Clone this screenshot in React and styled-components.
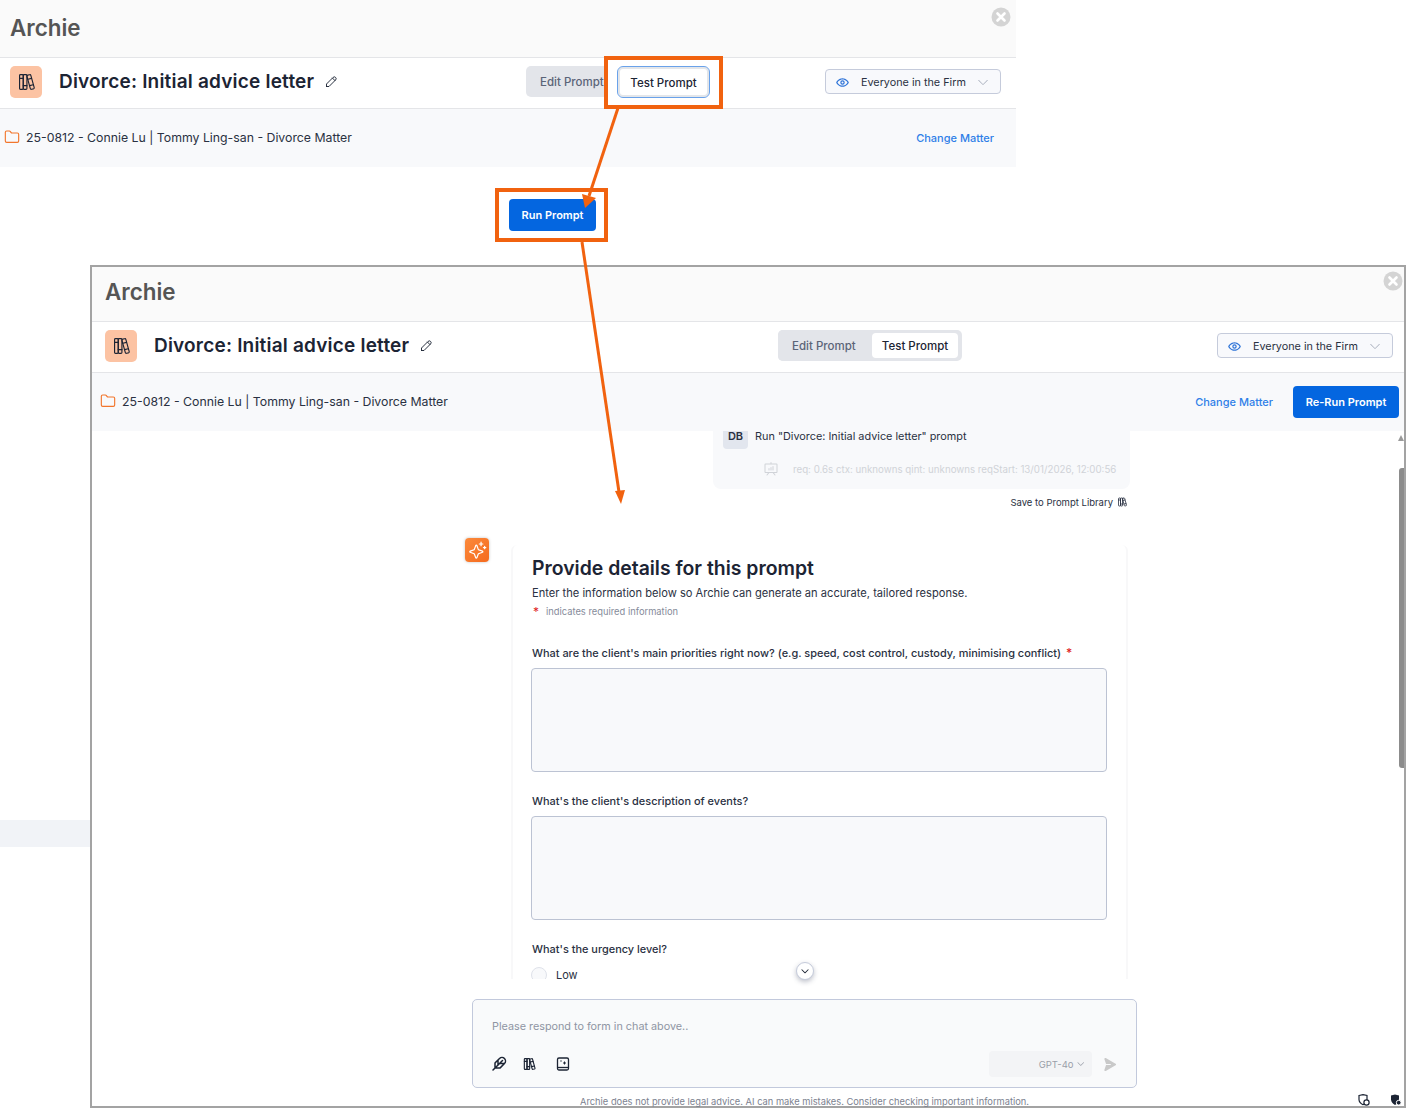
import React from "react";
import styled, { createGlobalStyle } from "styled-components";
import {
  PiEyeBold,
  PiCaretDownLight,
  PiCaretDown,
  PiCaretDownBold,
  PiSparkle,
  PiPresentationChart,
  PiFeatherBold,
  PiPaperPlaneRightFill,
} from "react-icons/pi";
import { TbBooks, TbPencil } from "react-icons/tb";
import { LuFolder } from "react-icons/lu";

const GlobalStyle = createGlobalStyle`
  html, body {
    margin: 0;
    padding: 0;
    background: #fff;
    font-family: Inter, "Noto Sans", sans-serif;
    color: #1c2434;
  }
  * { box-sizing: border-box; }
`;

const ORANGE = "#f1620f";

const Canvas = styled.div`
  position: relative;
  width: 1407px;
  height: 1109px;
  overflow: hidden;
`;

const Piece = styled.div`
  position: absolute;
  left: ${(p) => p.$x}px;
  top: ${(p) => p.$y}px;
  width: ${(p) => p.$w}px;
  height: ${(p) => p.$h}px;
`;

const SideStrip = styled(Piece)`
  background: #f1f3f7;
`;

const Framed = styled(Piece)`
  border: 2px solid #a3a3a3;
  background: #fff;
  display: flex;
  flex-direction: column;
`;

const Highlight = styled(Piece)`
  border: 4px solid ${ORANGE};
  z-index: 3;
`;

const Arrows = styled.svg`
  position: absolute;
  inset: 0;
  z-index: 4;
  pointer-events: none;
`;

const Header = styled.div`
  height: ${(p) => p.$height}px;
  flex: none;
  box-sizing: content-box;
  background: #fafafa;
  border-bottom: 1px solid #e4e5e8;
  display: flex;
  justify-content: space-between;
  align-items: center;
  padding: 0 ${(p) => p.$closeRight}px 0 ${(p) => p.$pad}px;
`;

const AppName = styled.div`
  font-size: 22.4px;
  font-weight: 600;
  color: #555;
  margin-bottom: ${(p) => p.$lift}px;
`;

const CloseButton = styled.svg`
  align-self: flex-start;
  margin-top: ${(p) => p.$top}px;
`;

const TitleRow = styled.div`
  height: 51px;
  flex: none;
  background: #fff;
  border-bottom: 1px solid #e4e5e8;
  display: grid;
  grid-template-columns: ${(p) => p.$left}px auto 1fr;
  align-items: center;
  padding: 0 ${(p) => p.$right}px 3px ${(p) => p.$pad}px;
`;

const TitleGroup = styled.div`
  display: flex;
  align-items: center;
`;

const IconTile = styled.div`
  width: 32px;
  height: 32px;
  border-radius: 5px;
  background: #fcc3a3;
  color: #1c2434;
  display: flex;
  align-items: center;
  justify-content: center;
  font-size: 22px;
  margin-right: 17px;
`;

const PromptTitle = styled.div`
  font-size: 19px;
  letter-spacing: 0.2px;
  font-weight: 600;
  color: #1c2434;
  margin-right: 10px;
`;

const EditIcon = styled.span`
  display: flex;
  font-size: 15px;
  color: #1c2434;
`;

const Toggle = styled.div`
  display: flex;
  align-items: center;
  border-radius: 5px;
  height: 31px;
  width: 184px;
  background: ${(p) => (p.$focused ? "transparent" : "#e3e5ea")};
  padding: ${(p) => (p.$focused ? "0" : "0 4px 0 0")};
`;

const EditTab = styled.div`
  font-size: 11.5px;
  font-weight: 500;
  color: #5b6478;
  white-space: nowrap;
  height: 31px;
  line-height: 33px;
  padding-left: 14px;
  flex: none;
  width: ${(p) => (p.$focused ? 78 : 94)}px;
  overflow: hidden;
  background: #e3e5ea;
  border-radius: 5px 0 0 5px;
`;

const TestTab = styled.div`
  font-size: 11.5px;
  font-weight: 500;
  color: #1c2434;
  background: #fff;
  border-radius: ${(p) => (p.$focused ? 6 : 4)}px;
  text-align: center;
  white-space: nowrap;
  flex: none;
  height: ${(p) => (p.$focused ? 32 : 25)}px;
  line-height: ${(p) => (p.$focused ? 32 : 27)}px;
  width: ${(p) => (p.$focused ? 93 : 86)}px;
  margin-left: ${(p) => (p.$focused ? 13 : 0)}px;
  border: ${(p) => (p.$focused ? "1px solid #6aa2ea" : "none")};
  box-shadow: ${(p) => (p.$focused ? "inset 0 0 0 2px #e3e6ea" : "none")};
`;

const AudienceSelect = styled.div`
  justify-self: end;
  width: 176px;
  height: 25px;
  padding: 1px 10px 0;
  border: 1px solid #c5cbdb;
  border-radius: 4px;
  background: #f8f9fc;
  display: flex;
  align-items: center;
  font-size: 10.8px;
  color: #2a3142;
`;

const EyeIcon = styled.span`
  display: flex;
  font-size: 13px;
  color: #2f74d8;
  margin-right: 12px;
`;

const Caret = styled.span`
  display: flex;
  margin-left: auto;
  font-size: 14px;
  color: #9aa2b1;
`;

const MatterRow = styled.div`
  position: relative;
  z-index: 1;
  height: 58px;
  flex: none;
  background: #f8f9fb;
  display: flex;
  align-items: center;
  padding: 0 ${(p) => p.$right}px 2px ${(p) => p.$pad}px;
  font-size: 12.3px;
  color: #2a3142;
`;

const FolderIcon = styled.span`
  display: flex;
  font-size: 16px;
  color: #f2762c;
  margin-right: 6px;
`;

const ChangeMatter = styled.div`
  margin: 2px 0 0 auto;
  font-size: 11px;
  font-weight: 500;
  color: #2f7fe8;
`;

const PrimaryButton = styled.div`
  background: #0466e0;
  color: #fff;
  font-size: 11px;
  font-weight: 600;
  border-radius: 4px;
  display: flex;
  align-items: center;
  justify-content: center;
  white-space: nowrap;
`;

const RunButton = styled(PrimaryButton)`
  width: 100%;
  height: 100%;
`;

const RerunButton = styled(PrimaryButton)`
  width: 106px;
  height: 32px;
  margin: 2px 0 0 20px;
`;

/* runs 2px under the matter row and 4px under the fade, so no line of text sits on the clip edge */
const ChatViewport = styled.div`
  height: 554px;
  flex: none;
  margin-top: -2px;
  padding: 2px 0 0 373px;
  overflow: hidden;
  position: relative;
`;

const ChatColumn = styled.div`
  width: 665px;
`;

const UserBubble = styled.div`
  width: 417px;
  margin-left: 248px;
  height: 58px;
  background: #f8f9fb;
  border-radius: 0 0 8px 8px;
  padding: 0 10px;
`;

const UserLine = styled.div`
  display: flex;
  align-items: flex-start;
  font-size: 10.86px;
  color: #2a3142;
`;

const UserAvatar = styled.div`
  width: 25px;
  height: 18px;
  background: #e2e6ee;
  border-radius: 0 0 4px 4px;
  font-size: 11px;
  font-weight: 600;
  line-height: 11px;
  text-align: center;
  margin-right: 7px;
`;

const UserText = styled.div`
  line-height: 10px;
`;

const MetaLine = styled.div`
  display: flex;
  align-items: center;
  height: 16px;
  margin: 12px 0 0 40px;
  font-size: 9.73px;
  color: #d0d3d8;
  white-space: nowrap;
`;

const MetaIcon = styled.span`
  display: flex;
  font-size: 16px;
  margin-right: 14px;
`;

const SaveRow = styled.div`
  display: flex;
  justify-content: flex-end;
  align-items: center;
  height: 14px;
  margin: 6px 2px 0 0;
  font-size: 9.5px;
  color: #2a3142;
  gap: 3px;
`;

const SaveIcon = styled.span`
  display: flex;
  font-size: 12px;
`;

const ResponseRow = styled.div`
  display: flex;
  align-items: flex-start;
  margin-top: 29px;
`;

const BotAvatar = styled.div`
  width: 24px;
  height: 24px;
  flex: none;
  border-radius: 4px;
  background: linear-gradient(135deg, #fb8a3c, #f56a1d);
  box-shadow: 0 0 3px rgba(0, 0, 0, 0.25);
  color: #fff;
  display: flex;
  align-items: center;
  justify-content: center;
  font-size: 19px;
`;

const FormCard = styled.div`
  margin: 7px 0 0 22px;
  width: 617px;
  padding: 11px 19px 0;
  border-left: 2px solid #f8f8f9;
  border-right: 2px solid #f8f8f9;
  border-radius: 6px 6px 0 0;
`;

const FormTitle = styled.div`
  font-size: 19.4px;
  font-weight: 600;
  line-height: 24px;
  color: #1c2434;
`;

const FormIntro = styled.div`
  font-size: 11.13px;
  line-height: 14px;
  margin-top: 6px;
  color: #2a3142;
`;

const RequiredNote = styled.div`
  display: flex;
  align-items: center;
  font-size: 9.35px;
  line-height: 12px;
  margin-top: 6px;
  color: #858b9a;
`;

const Star = styled.span`
  color: #e02424;
  margin: ${(p) => (p.$inline ? "0 0 0 5px" : "0 7px 0 1px")};
  font-size: 12px;
`;

const FieldLabel = styled.div`
  font-size: 10.95px;
  font-weight: 500;
  line-height: 14px;
  margin-top: ${(p) => p.$top}px;
  color: #2a3142;
  white-space: nowrap;
`;

const AnswerBox = styled.div`
  height: 104px;
  margin: 8px 0 0 -1px;
  border: 1px solid #bcc3d3;
  border-radius: 4px;
  background: #f8f9fb;
`;

const RadioRow = styled.div`
  display: flex;
  align-items: center;
  margin-top: 11px;
  font-size: 11px;
  line-height: 14px;
  color: #2a3142;
`;

const RadioDot = styled.span`
  width: 16px;
  height: 16px;
  margin-left: -1px;
  border-radius: 50%;
  border: 1px solid #dfe2ea;
  background: #f8f9fb;
  margin-right: 9px;
`;

const BottomFade = styled.div`
  position: absolute;
  left: 0;
  right: 0;
  bottom: 0;
  height: 4px;
  background: #fff;
`;

const ScrollDown = styled.div`
  position: absolute;
  left: 704px;
  top: 695px;
  width: 18px;
  height: 18px;
  border-radius: 50%;
  background: #fff;
  border: 1px solid #c5cbdb;
  box-shadow: 0 2px 5px rgba(40, 50, 80, 0.3);
  color: #1c2434;
  display: flex;
  align-items: center;
  justify-content: center;
  font-size: 10px;
`;

const Composer = styled.div`
  width: 665px;
  height: 89px;
  flex: none;
  margin: 16px 0 0 380px;
  border: 1px solid #c2c9dc;
  border-radius: 5px;
  background: #f9fafb;
  padding: 0 19px;
  display: flex;
  flex-direction: column;
`;

const Placeholder = styled.div`
  font-size: 10.8px;
  color: #8f95a3;
  margin-top: 20px;
  line-height: 13px;
`;

const ComposerTools = styled.div`
  display: flex;
  align-items: center;
  margin-top: 18px;
  font-size: 16px;
  color: #1c2434;
`;

const ToolIcon = styled.span`
  display: flex;
  margin-left: ${(p) => p.$gap}px;
`;

const ModelPicker = styled.div`
  margin: 0 10px 0 auto;
  width: 103px;
  height: 26px;
  border-radius: 4px;
  background: #f3f4f6;
  display: flex;
  align-items: center;
  justify-content: flex-end;
  gap: 2px;
  padding-right: 7px;
  font-size: 9.5px;
  color: #9a9fa9;
`;

const SendIcon = styled.span`
  display: flex;
  font-size: 15px;
  color: #c9c9c9;
`;

const Disclaimer = styled.div`
  width: 665px;
  margin: 8px 0 0 380px;
  text-align: center;
  font-size: 9.32px;
  line-height: 11px;
  color: #7c8290;
  white-space: nowrap;
`;

const StatusIcon = styled.svg`
  position: absolute;
  top: ${(p) => p.$y}px;
  left: ${(p) => p.$x}px;
`;

const ScrollArrow = styled.div`
  position: absolute;
  right: 0;
  top: 6px;
  width: 0;
  height: 0;
  border-left: 3px solid transparent;
  border-right: 3px solid transparent;
  border-bottom: 6px solid #9a9a9a;
`;

const ScrollThumb = styled.div`
  position: absolute;
  right: 0;
  top: 39px;
  width: 5px;
  height: 300px;
  border-radius: 3px 0 0 3px;
  background: #8c8c8c;
`;

function CloseGlyph({ top }) {
  return (
    <CloseButton $top={top} width="20" height="20" viewBox="0 0 20 20">
      <circle cx="10" cy="10" r="9.5" fill="#d4d4d4" />
      <path d="M6.5 6.5l7 7M13.5 6.5l-7 7" stroke="#fff" strokeWidth="2.6" strokeLinecap="round" />
    </CloseButton>
  );
}

function BookSpark() {
  return (
    <svg width="16" height="16" viewBox="0 0 16 16" fill="none" stroke="currentColor" strokeWidth="1.3">
      <rect x="2.5" y="2" width="11" height="12" rx="1.5" />
      <path d="M2.5 11.5h11" />
      <path d="M9.5 5.5v3M8 7h3" strokeWidth="1" />
      <circle cx="6" cy="5" r=".7" fill="currentColor" stroke="none" />
    </svg>
  );
}

function AppWindow({ focused, headerHeight, titleLift, pad, left, selectRight, closeTop, closeRight, matterPad, matterRight, children }) {
  return (
    <>
      <Header $height={headerHeight} $pad={pad} $closeRight={closeRight}>
        <AppName $lift={titleLift}>Archie</AppName>
        <CloseGlyph top={closeTop} />
      </Header>
      <TitleRow $left={left} $pad={pad} $right={selectRight}>
        <TitleGroup>
          <IconTile>
            <TbBooks strokeWidth={1.25} />
          </IconTile>
          <PromptTitle>Divorce: Initial advice letter</PromptTitle>
          <EditIcon>
            <TbPencil strokeWidth={1.5} />
          </EditIcon>
        </TitleGroup>
        <Toggle $focused={focused}>
          <EditTab $focused={focused}>Edit Prompt</EditTab>
          <TestTab $focused={focused}>Test Prompt</TestTab>
        </Toggle>
        <AudienceSelect>
          <EyeIcon>
            <PiEyeBold />
          </EyeIcon>
          Everyone in the Firm
          <Caret>
            <PiCaretDownLight />
          </Caret>
        </AudienceSelect>
      </TitleRow>
      <MatterRow $pad={matterPad} $right={matterRight}>
        <FolderIcon>
          <LuFolder strokeWidth={1.7} />
        </FolderIcon>
        25-0812 - Connie Lu | Tommy Ling-san - Divorce Matter
        <ChangeMatter>Change Matter</ChangeMatter>
        {children}
      </MatterRow>
    </>
  );
}

export default function App() {
  return (
    <Canvas>
      <GlobalStyle />

      <Piece $x={0} $y={0} $w={1016} $h={167}>
        <AppWindow
          focused
          headerHeight={57}
          titleLift={2}
          pad={10}
          left={516}
          selectRight={15}
          closeTop={7}
          closeRight={5}
          matterPad={4}
          matterRight={22}
        />
      </Piece>

      <Highlight $x={604} $y={56} $w={119} $h={53} />

      <Piece $x={509} $y={199} $w={87} $h={32}>
        <RunButton>Run Prompt</RunButton>
      </Piece>
      <Highlight $x={495} $y={188} $w={113} $h={54} />

      <SideStrip $x={0} $y={820} $w={90} $h={27} />

      <Framed $x={90} $y={265} $w={1316} $h={843}>
        <AppWindow
          headerHeight={54}
          titleLift={6}
          pad={13}
          left={673}
          selectRight={11}
          closeTop={4}
          closeRight={1}
          matterPad={8}
          matterRight={5}
        >
          <RerunButton>Re-Run Prompt</RerunButton>
        </AppWindow>

        <ChatViewport>
          <ChatColumn>
            <UserBubble>
              <UserLine>
                <UserAvatar>DB</UserAvatar>
                <UserText>Run "Divorce: Initial advice letter" prompt</UserText>
              </UserLine>
              <MetaLine>
                <MetaIcon>
                  <PiPresentationChart />
                </MetaIcon>
                req: 0.6s ctx: unknowns qint: unknowns reqStart: 13/01/2026, 12:00:56
              </MetaLine>
            </UserBubble>
            <SaveRow>
              Save to Prompt Library
              <SaveIcon>
                <TbBooks strokeWidth={1.6} />
              </SaveIcon>
            </SaveRow>
            <ResponseRow>
              <BotAvatar>
                <PiSparkle />
              </BotAvatar>
              <FormCard>
                <FormTitle>Provide details for this prompt</FormTitle>
                <FormIntro>Enter the information below so Archie can generate an accurate, tailored response.</FormIntro>
                <RequiredNote>
                  <Star>*</Star>
                  indicates required information
                </RequiredNote>
                <FieldLabel $top={28}>
                  What are the client's main priorities right now? (e.g. speed, cost control, custody, minimising conflict)
                  <Star $inline>*</Star>
                </FieldLabel>
                <AnswerBox />
                <FieldLabel $top={22}>What's the client's description of events?</FieldLabel>
                <AnswerBox />
                <FieldLabel $top={22}>What's the urgency level?</FieldLabel>
                <RadioRow>
                  <RadioDot />
                  Low
                </RadioRow>
              </FormCard>
            </ResponseRow>
          </ChatColumn>
          <BottomFade />
          <ScrollArrow />
          <ScrollThumb />
        </ChatViewport>

        <ScrollDown>
          <PiCaretDownBold />
        </ScrollDown>

        <Composer>
          <Placeholder>Please respond to form in chat above..</Placeholder>
          <ComposerTools>
            <ToolIcon $gap={-1}>
              <PiFeatherBold />
            </ToolIcon>
            <ToolIcon $gap={14}>
              <TbBooks strokeWidth={1.7} />
            </ToolIcon>
            <ToolIcon $gap={18}>
              <BookSpark />
            </ToolIcon>
            <ModelPicker>
              GPT-4o
              <PiCaretDown />
            </ModelPicker>
            <SendIcon>
              <PiPaperPlaneRightFill />
            </SendIcon>
          </ComposerTools>
        </Composer>
        <Disclaimer>Archie does not provide legal advice. AI can make mistakes. Consider checking important information.</Disclaimer>

        <StatusIcon $x={1266} $y={827} width="12" height="12" viewBox="0 0 12 12" fill="none" stroke="#1c2434" strokeWidth="1.2">
          <path d="M1 1.5 5 .6l4 .9v4c0 2.4-2 4.2-4 5.2-2-1-4-2.8-4-5.2z" />
          <circle cx="8.5" cy="8.5" r="2.6" fill="#fff" />
        </StatusIcon>
        <StatusIcon $x={1298} $y={827} width="12" height="12" viewBox="0 0 12 12" fill="#1c2434">
          <path d="M1 1.5 5 .5l4 1v4c0 2.5-2 4.5-4 5.5-2-1-4-3-4-5.5z" />
          <circle cx="8.7" cy="8.7" r="2.4" stroke="#fff" strokeWidth="1" />
        </StatusIcon>
      </Framed>

      <Arrows width="1407" height="1109" viewBox="0 0 1407 1109">
        <g stroke={ORANGE} strokeWidth="3" fill={ORANGE}>
          <line x1="618" y1="108" x2="589" y2="196" />
          <path d="M585 208 L582 194 L596 198 Z" strokeWidth="0" />
          <line x1="582" y1="242" x2="619" y2="492" />
          <path d="M621 504 L615 491 L625 490 Z" strokeWidth="0" />
        </g>
      </Arrows>
    </Canvas>
  );
}
